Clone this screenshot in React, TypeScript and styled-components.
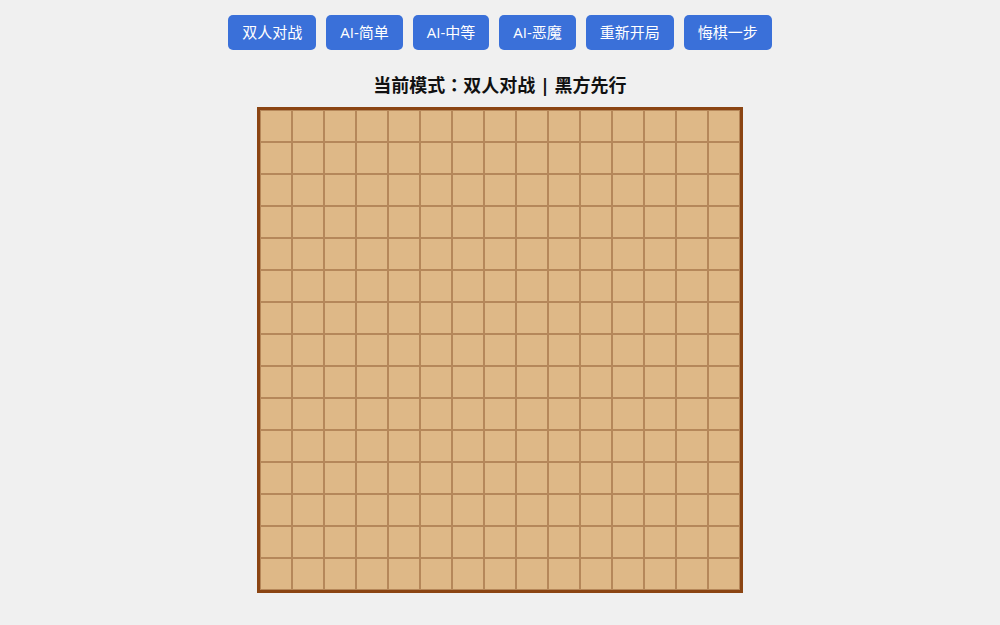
import React from "react";
import styled, { createGlobalStyle } from "styled-components";

const Global = createGlobalStyle`
  html, body {
    margin: 0;
    padding: 0;
    background: #f0f0f0;
    font-family: "Open Sans", "Noto Sans CJK SC", sans-serif;
  }
`;

const Page = styled.div`
  display: flex;
  flex-direction: column;
  align-items: center;
  padding-top: 15px;
`;

const Toolbar = styled.div`
  display: flex;
  gap: 10px;
`;

const Button = styled.button`
  height: 35px;
  padding: 0 14px;
  border: none;
  border-radius: 5px;
  background: #3a70d9;
  color: #ffffff;
  font-family: "Open Sans", "Noto Sans CJK SC", sans-serif;
  font-size: 15px;
  line-height: 35px;
  cursor: pointer;
`;

const Status = styled.h2`
  height: 26px;
  margin: 22px 0 9px;
  font-size: 18px;
  line-height: 26px;
  font-weight: 700;
  color: #111111;
  font-family: "Open Sans", "Noto Sans CJK SC", sans-serif;
`;

/* full-width colon drawn centred in its cell */
const Colon = styled.span`
  font-family: "Noto Sans CJK JP", sans-serif;
  line-height: 1;
`;

const Board = styled.div`
  display: grid;
  grid-template-columns: repeat(15, 32px);
  grid-auto-rows: 32px;
  border: 3px solid #8b4513;
  background: #deb887;
`;

const Cell = styled.div`
  box-sizing: border-box;
  border: 1px solid #b5875a;
  background: #deb887;
`;

const modes = ["双人对战", "AI-简单", "AI-中等", "AI-恶魔", "重新开局", "悔棋一步"];

export default function App() {
  return (
    <>
      <Global />
      <Page>
        <Toolbar>
          {modes.map((m) => (
            <Button key={m}>{m}</Button>
          ))}
        </Toolbar>
        <Status>
          当前模式<Colon>：</Colon>双人对战 | 黑方先行
        </Status>
        <Board>
          {Array.from({ length: 225 }, (_, i) => (
            <Cell key={i} />
          ))}
        </Board>
      </Page>
    </>
  );
}
